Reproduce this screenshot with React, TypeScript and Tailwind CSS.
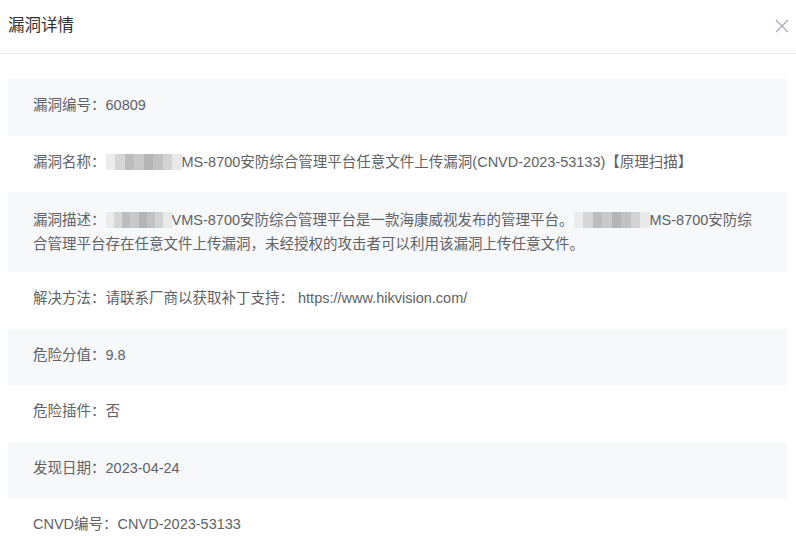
import React from 'react';

const shades = ['#ececec', '#d6d6d6', '#bdbdbd', '#c9c9c9', '#b5b5b5', '#c2c2c2', '#d3d3d3', '#e9e9e9'];

function Mosaic({ width }: { width: number }) {
    return (
        <span className="inline-block align-[-3px] h-[16px] overflow-hidden" style={{ width }}>
            <span className="flex h-full blur-[0.6px]">
                {shades.map((c, i) => (
                    <span key={i} className="flex-1 h-full" style={{ backgroundColor: c }} />
                ))}
            </span>
        </span>
    );
}

const rows: { key: number; multi?: boolean; content: React.ReactNode }[] = [
    { key: 1, content: <>漏洞编号：60809</> },
    {
        key: 2,
        content: (
            <>
                漏洞名称：<Mosaic width={76} />MS-8700安防综合管理平台任意文件上传漏洞(CNVD-2023-53133)【原理扫描】
            </>
        ),
    },
    {
        key: 3,
        multi: true,
        content: (
            <>
                漏洞描述：<Mosaic width={66} />VMS-8700安防综合管理平台是一款海康威视发布的管理平台。<Mosaic width={76} />MS-8700安防综
                <br />
                合管理平台存在任意文件上传漏洞，未经授权的攻击者可以利用该漏洞上传任意文件。
            </>
        ),
    },
    { key: 4, content: <>解决方法：请联系厂商以获取补丁支持： https://www.hikvision.com/</> },
    { key: 5, content: <>危险分值：9.8</> },
    { key: 6, content: <>危险插件：否</> },
    { key: 7, content: <>发现日期：2023-04-24</> },
    { key: 8, content: <>CNVD编号：CNVD-2023-53133</> },
];

export default function App() {
    return (
        <div
            className="w-[796px] h-[536px] overflow-hidden bg-white"
            style={{ fontFamily: '"Liberation Sans", Arial, "Noto Sans CJK SC", sans-serif' }}
        >
            <div className="h-[54px] flex items-center justify-between pl-2 pr-[7px] pb-[3px] border-b border-[#ebeef5]">
                <span className="text-[16.5px] text-[#303133]">漏洞详情</span>
                <svg width="14" height="14" viewBox="0 0 14 14" className="mt-[2px]">
                    <path d="M1 1L13 13M13 1L1 13" stroke="#a8abb2" strokeWidth="1.2" fill="none" />
                </svg>
            </div>
            <div className="pl-2 pr-[9px] pt-[25px]">
                {rows.map((r, i) => (
                    <div
                        key={r.key}
                        className={`px-[25px] text-[14.5px] leading-[23.5px] text-[#606266] ${r.multi ? 'pt-[17px] pb-[16px]' : 'pt-[15px] pb-[18px]'} ${i % 2 === 0 ? 'bg-[#f7f8fa]' : 'bg-white'}`}
                    >
                        {r.content}
                    </div>
                ))}
            </div>
        </div>
    );
}
